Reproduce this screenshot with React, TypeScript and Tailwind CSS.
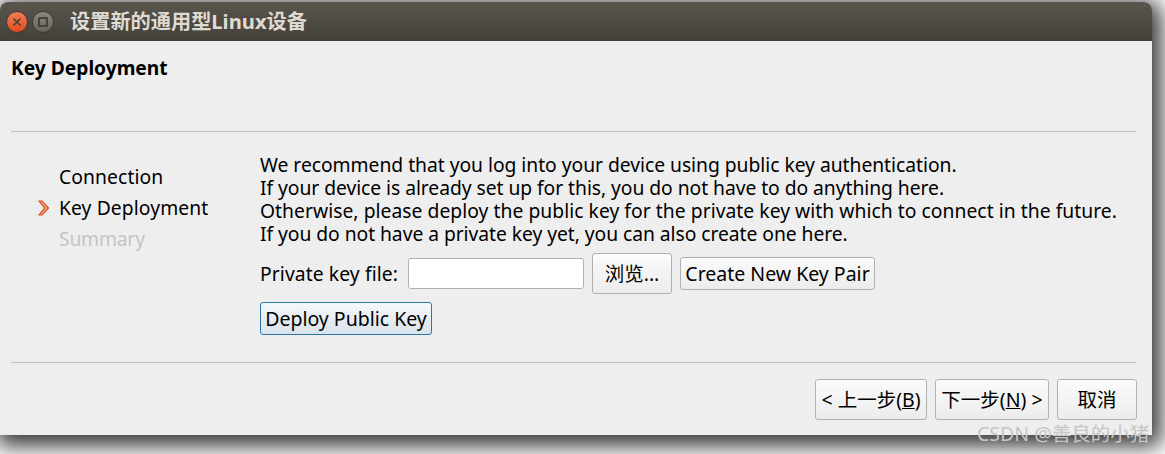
const sans = "font-['Noto_Sans','Noto_Sans_CJK_SC',sans-serif]";

function NavItem({ label, active, disabled }: { label: string; active?: boolean; disabled?: boolean }) {
  return (
    <div className="flex items-center h-[31px]">
      <div className="w-[22px] pl-[1px] flex items-center">
        {active && (
          <svg width="12" height="16" viewBox="0 0 12 16">
            <path d="M1 1 H4 L10.5 8 L4 15 H1 L6.5 8 Z" fill="#f0a27a" stroke="#d9531e" strokeWidth="1.2" />
          </svg>
        )}
      </div>
      <span className={disabled ? "text-[#c4c4c4] tracking-[-0.2px]" : "text-black tracking-[0.1px]"}>{label}</span>
    </div>
  );
}

function Btn({ children, className }: { children: React.ReactNode; className: string }) {
  return (
    <button className={`flex items-center justify-center rounded-[3px] border border-[#b0b0ae] bg-gradient-to-b from-[#fbfbfb] to-[#ececec] text-[19.5px] text-black ${className}`}>
      {children}
    </button>
  );
}

export default function App() {
  return (
    <div className={`relative w-[1165px] h-[454px] overflow-hidden bg-white text-[19.3px] leading-[23px] ${sans}`}>
      <div className="mt-[2px] w-[1152px] h-[433px] flex flex-col bg-[#eeeeee] rounded-t-[8px] shadow-[3px_5px_22px_6px_rgba(0,0,0,0.8)]">
        <div className="h-[39px] shrink-0 flex items-center pl-[6px] rounded-t-[8px] bg-gradient-to-b from-[#5a564e] to-[#43403a]">
          <div className="w-[22px] h-[22px] rounded-full bg-gradient-to-b from-[#f27d50] to-[#df4a1a] flex items-center justify-center border border-[#3c3a35]">
            <svg width="10" height="10" viewBox="0 0 10 10">
              <path d="M1.5 1.5 L8.5 8.5 M8.5 1.5 L1.5 8.5" stroke="#41403a" strokeWidth="1.5" />
            </svg>
          </div>
          <div className="ml-[4px] w-[22px] h-[22px] rounded-full bg-gradient-to-b from-[#8a8880] to-[#66645d] flex items-center justify-center border border-[#3c3a35]">
            <div className="w-[10px] h-[10px] rounded-[1px] border-2 border-[#45433d]" />
          </div>
          <span className="ml-[16px] text-[20.2px] font-bold text-[#dfdbd2]">设置新的通用型Linux设备</span>
        </div>

        <div className="flex-1 flex flex-col pl-[11px] pr-[16px]">
          <div className="h-[91px] shrink-0 border-b border-[#c0c0c0] pt-[15px] text-[19.2px] font-bold text-black">
            Key Deployment
          </div>

          <div className="h-[231px] shrink-0 flex border-b border-[#c0c0c0]">
            <div className="w-[249px] shrink-0 pl-[26px] pt-[29px]">
              <NavItem label="Connection" />
              <NavItem label="Key Deployment" active />
              <NavItem label="Summary" disabled />
            </div>
            <div className="flex-1 pt-[21px] text-black">
              <p className="whitespace-nowrap tracking-[-0.03px]">We recommend that you log into your device using public key authentication.</p>
              <p className="whitespace-nowrap tracking-[-0.05px]">If your device is already set up for this, you do not have to do anything here.</p>
              <p className="whitespace-nowrap tracking-[0.04px]">Otherwise, please deploy the public key for the private key with which to connect in the future.</p>
              <p className="whitespace-nowrap tracking-[-0.05px]">If you do not have a private key yet, you can also create one here.</p>
              <div className="mt-[7px] flex items-center h-[42px]">
                <span className="w-[148px] shrink-0 tracking-[0.1px]">Private key file:</span>
                <div className="w-[176px] h-[31px] rounded-[3px] border border-[#b0b0ae] bg-white" />
                <Btn className="ml-[8px] w-[80px] h-[41px]">浏览...</Btn>
                <Btn className="ml-[8px] w-[195px] h-[33px]">Create New Key Pair</Btn>
              </div>
              <Btn className="mt-[8px] w-[172px] h-[33px] !border-[#2a76a8] !from-[#f6f8fa] !to-[#d9e3ea]">Deploy Public Key</Btn>
            </div>
          </div>

          <div className="flex-1 flex justify-end items-start gap-[8px] pt-[16px] -mr-[1px]">
            <Btn className="w-[112px] h-[41px]">&lt; 上一步(<u>B</u>)</Btn>
            <Btn className="w-[114px] h-[41px]">下一步(<u>N</u>) &gt;</Btn>
            <Btn className="w-[80px] h-[41px]">取消</Btn>
          </div>
        </div>
      </div>
      <span className="absolute left-[977px] top-[422px] text-[19.5px] leading-[24px] text-[#c6c6c6] whitespace-nowrap">CSDN @善良的小猪</span>
    </div>
  );
}
